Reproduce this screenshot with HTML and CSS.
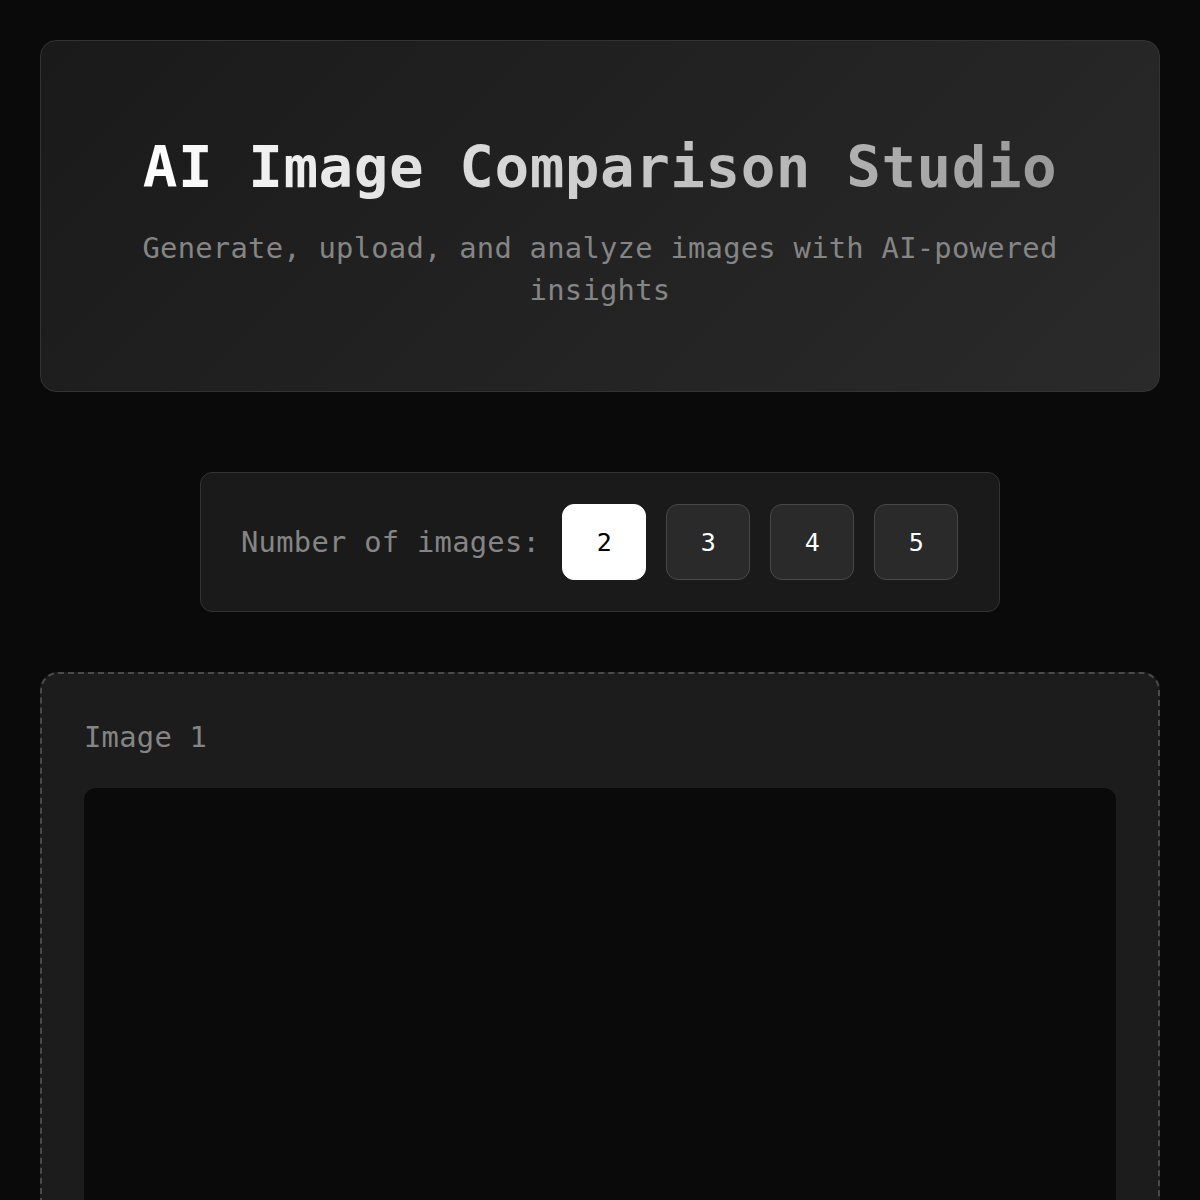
FILE: index.html
```html
<!DOCTYPE html>
<html lang="en">
<head>
<meta charset="utf-8">
<title>AI Image Comparison Studio</title>
<link rel="stylesheet" href="styles.css">
</head>
<body>
<main class="app">
  <header class="hero">
    <h1 class="hero-title">AI Image Comparison Studio</h1>
    <p class="hero-subtitle">Generate, upload, and analyze images with AI-powered insights</p>
  </header>

  <section class="count-selector">
    <span class="count-label">Number of images:</span>
    <button class="count-btn active">2</button>
    <button class="count-btn">3</button>
    <button class="count-btn">4</button>
    <button class="count-btn">5</button>
  </section>

  <section class="image-card">
    <div class="image-label">Image 1</div>
    <div class="image-area"></div>
  </section>
</main>
</body>
</html>
```
FILE: styles.css
```css
* { box-sizing: border-box; }

html, body {
  margin: 0;
  padding: 0;
  background: #0a0a0a;
  color: #ffffff;
  font-family: "DejaVu Sans Mono", "Liberation Mono", monospace;
}

.app {
  padding: 40px;
  display: flex;
  flex-direction: column;
  align-items: center;
}

.hero {
  width: 100%;
  padding: 84px 100px 80px;
  border: 1px solid #333333;
  border-radius: 16px;
  background: linear-gradient(135deg, #1a1a1a 0%, #2a2a2a 100%);
  text-align: center;
  margin-bottom: 80px;
}

.hero-title {
  margin: 0 0 16px;
  font-size: 57.6px;
  line-height: 86px;
  font-weight: 700;
  letter-spacing: 0.5px;
  background: linear-gradient(90deg, #ffffff 0%, #999999 100%);
  -webkit-background-clip: text;
  background-clip: text;
  color: transparent;
}

.hero-subtitle {
  margin: 0;
  font-size: 28.8px;
  line-height: 42px;
  letter-spacing: 0.26px;
  color: #858585;
}

.count-selector {
  width: 800px;
  display: flex;
  align-items: center;
  gap: 20px;
  padding: 31px 40px;
  background: #1a1a1a;
  border: 1px solid #333333;
  border-radius: 12px;
  margin-bottom: 60px;
}

.count-label {
  font-size: 28.8px;
  letter-spacing: 0.26px;
  color: #858585;
  line-height: 42px;
  margin-right: 2px;
}

.count-btn {
  width: 84px;
  height: 76px;
  border-radius: 12px;
  border: 1px solid #484848;
  background: #2a2a2a;
  color: #ffffff;
  font-family: inherit;
  font-size: 25px;
  padding: 0;
}

.count-btn.active {
  background: #ffffff;
  border-color: #ffffff;
  color: #000000;
}

.image-card {
  width: 100%;
  padding: 42px;
  border: 2px dashed #4a4a4a;
  border-radius: 18px;
  background: #1c1c1c;
}

.image-label {
  font-size: 28.8px;
  line-height: 42px;
  letter-spacing: 0.26px;
  color: #858585;
  margin-bottom: 30px;
}

.image-area {
  height: 600px;
  border-radius: 12px;
  background: #0a0a0a;
}
```
